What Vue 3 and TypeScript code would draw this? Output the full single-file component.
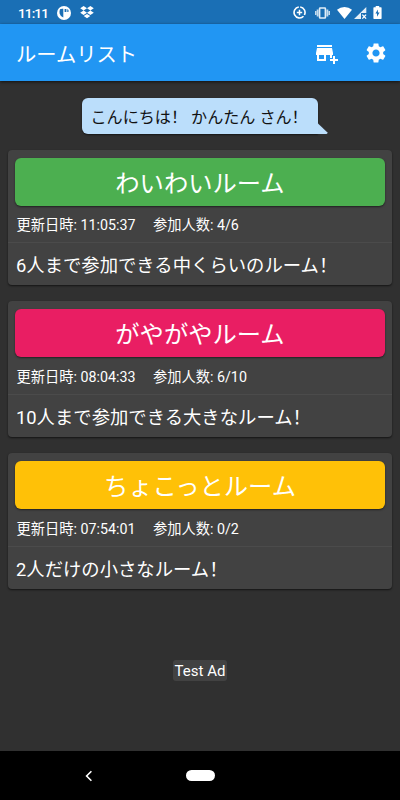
<script setup lang="ts">
interface Room {
  name: string
  tone: string
  updated: string
  members: string
  description: string
}

const rooms: Room[] = [
  { name: 'わいわいルーム', tone: 'green', updated: '11:05:37', members: '4/6', description: '6人まで参加できる中くらいのルーム！' },
  { name: 'がやがやルーム', tone: 'pink', updated: '08:04:33', members: '6/10', description: '10人まで参加できる大きなルーム！' },
  { name: 'ちょこっとルーム', tone: 'amber', updated: '07:54:01', members: '0/2', description: '2人だけの小さなルーム！' },
]
</script>

<template>
  <div class="screen">
    <div class="status">
      <span class="clock">11:11</span>
      <svg class="app-icon" width="14" height="14" viewBox="0 0 14 14">
        <circle cx="7" cy="7" r="7" fill="#fff" />
        <path d="M3 3.3Q4 2.6 6.3 2.8V11.6Q3.4 10.5 2.6 7.5Q2.2 5 3 3.3Z M7.6 3H9.4V6H7.6Z M10.3 3Q12 3.8 11.6 5.4Q11.2 6.2 10.3 6Z" fill="#1a6fb5" />
      </svg>
      <svg class="dropbox" width="14" height="13" viewBox="0 0 14 13">
        <path d="M3.6 0L7 2.2L3.6 4.4L.2 2.2Z M10.4 0L13.8 2.2L10.4 4.4L7 2.2Z M3.6 4.5L7 6.7L3.6 8.9L.2 6.7Z M10.4 4.5L13.8 6.7L10.4 8.9L7 6.7Z M7 7.9L10.3 10.1L7 12.3L3.7 10.1Z" fill="#fff" />
      </svg>
      <span class="grow"></span>
      <svg class="saver" width="13" height="13" viewBox="0 0 13 13" fill="none" stroke="#fff">
        <path d="M7.2 1A5.5 5.5 0 0 1 11.4 9M10.5 10.3A5.5 5.5 0 1 1 5.8 1" stroke-width="1.6" />
        <path d="M6.5 3.8V9.2M3.8 6.5H9.2" stroke-width="1.5" />
      </svg>
      <svg class="vibrate" width="15" height="12" viewBox="0 0 15 12">
        <path d="M0 4H1.4V8H0Z M1.7 2.5H3.6V9.5H1.7Z M13.6 4H15V8H13.6Z M11.4 2.5H13.3V9.5H11.4Z" fill="#c4dbed" />
        <rect x="4.6" y="1" width="5.8" height="10" rx=".6" fill="none" stroke="#e2eef7" stroke-width="1.6" />
      </svg>
      <svg class="wifi" width="15" height="12" viewBox="0 0 15 12">
        <path d="M7.5 12L0 2.7Q3.2 0 7.5 0T15 2.7Z" fill="#fff" />
      </svg>
      <svg class="signal" width="13" height="12" viewBox="0 0 13 12">
        <path d="M0 12L12.3 0V6H7V12Z" fill="#e4eff8" />
        <path d="M8.3 7.6L12.1 11.6M12.1 7.6L8.3 11.6" stroke="#fff" stroke-width="1.3" />
      </svg>
      <svg class="battery" width="9" height="13" viewBox="0 0 9 13">
        <path d="M2.7 0H6.2V1.3H8Q8.6 1.3 8.6 2V12.3Q8.6 13 8 13H1Q.4 13 .4 12.3V2Q.4 1.3 1 1.3H2.7Z" fill="#fff" />
        <path d="M4.9 3.4L2.4 7.5H4V10.8L6.6 6.6H4.9Z" fill="#1a6fb5" />
      </svg>
    </div>

    <header class="appbar">
      <h1>ルームリスト</h1>
      <span class="grow"></span>
      <svg class="add-room" width="24" height="24" viewBox="0 0 24 24" fill="#fff">
        <path d="M15 17h2v-3h1v-2l-1-5H2l-1 5v2h1v6h9v-6h4v3zm-6 1H4v-4h5v4zM2 4h15v2H2zM20 18v-3h-2v3h-3v2h3v3h2v-3h3v-2z" />
      </svg>
      <svg class="settings" width="24" height="24" viewBox="0 0 24 24" fill="#fff">
        <path d="M19.14 12.94c.04-.3.06-.61.06-.94 0-.32-.02-.64-.07-.94l2.03-1.58c.18-.14.23-.41.12-.61l-1.92-3.32c-.12-.22-.37-.29-.59-.22l-2.39.96c-.5-.38-1.03-.7-1.62-.94l-.36-2.54c-.04-.24-.24-.41-.48-.41h-3.84c-.24 0-.43.17-.47.41l-.36 2.54c-.59.24-1.13.57-1.62.94l-2.39-.96c-.22-.08-.47 0-.59.22L2.74 8.87c-.12.21-.08.47.12.61l2.03 1.58c-.05.3-.09.63-.09.94s.02.64.07.94l-2.03 1.58c-.18.14-.23.41-.12.61l1.92 3.32c.12.22.37.29.59.22l2.39-.96c.5.38 1.03.7 1.62.94l.36 2.54c.05.24.24.41.48.41h3.84c.24 0 .44-.17.47-.41l.36-2.54c.59-.24 1.13-.56 1.62-.94l2.39.96c.22.08.47 0 .59-.22l1.92-3.32c.12-.22.07-.47-.12-.61l-2.01-1.58zM12 15.6c-1.98 0-3.6-1.62-3.6-3.6s1.62-3.6 3.6-3.6 3.6 1.62 3.6 3.6-1.62 3.6-3.6 3.6z" />
      </svg>
    </header>

    <main>
      <div class="bubble">
        <span>こんにちは！ かんたん さん！</span>
        <svg class="tail" width="12" height="12" viewBox="0 0 12 12"><path d="M0 0L2 1.5L11.2 10.2Q12 11.8 10.4 12H0Z" fill="#bbdefb" /></svg>
      </div>

      <section v-for="room in rooms" :key="room.name" class="card">
        <button class="room-button" :class="room.tone">{{ room.name }}</button>
        <div class="meta">
          <span class="updated">更新日時: {{ room.updated }}</span>
          <span>参加人数: {{ room.members }}</span>
        </div>
        <p class="description">{{ room.description }}</p>
      </section>

      <div class="ad">Test Ad</div>
    </main>

    <nav class="navbar">
      <svg class="back" width="8" height="12" viewBox="0 0 8 12"><path d="M6.4 1.2L1.6 6L6.4 10.8" fill="none" stroke="#fff" stroke-width="1.6" /></svg>
      <span class="home"></span>
    </nav>
  </div>
</template>

<style>
body {
  margin: 0;
  background: #303030;
}
</style>

<style scoped>
.screen {
  width: 400px;
  height: 800px;
  display: flex;
  flex-direction: column;
  overflow: hidden;
  background: #303030;
  color: #fff;
  font-family: Roboto, 'Noto Sans CJK SC', sans-serif;
}
.status {
  box-sizing: border-box;
  height: 24px;
  flex: none;
  display: flex;
  align-items: center;
  padding: 1px 18px 0 18px;
  background: #1a6fb5;
}
.clock {
  width: 39px;
  font-size: 13.6px;
  font-weight: 500;
  letter-spacing: -0.9px;
  line-height: 24px;
}
.dropbox { margin-left: 9px; }
.grow { flex: 1; }
.vibrate { margin-left: 9px; }
.wifi { margin-left: 7px; }
.signal { margin-left: 1.5px; }
.battery { margin-left: 6.5px; }
.saver { margin-right: 0.5px; }
.appbar {
  position: relative;
  height: 57px;
  flex: none;
  display: flex;
  align-items: center;
  box-sizing: border-box;
  padding: 1px 12.5px 0 16px;
  background: #2196f3;
  box-shadow: 0 1px 3px rgba(0, 0, 0, 0.65);
}
h1 {
  margin: 0;
  padding-top: 3px;
  font-size: 20.3px;
  font-weight: 400;
  line-height: 30px;
}
.settings { margin-left: 25px; }
main {
  flex: 1;
  display: flex;
  flex-direction: column;
  align-items: center;
  padding: 16.6px 8px 0;
}
.bubble {
  position: relative;
  box-sizing: border-box;
  width: 236px;
  height: 36px;
  flex: none;
  margin: 0 0 16px 0;
  padding-left: 8.5px;
  border-radius: 6px 6px 0 6px;
  background: #bbdefb;
  box-shadow: 0 1px 2px rgba(0, 0, 0, 0.55);
  color: #111;
  font-size: 16.1px;
  line-height: 39px;
  white-space: nowrap;
}
.tail {
  position: absolute;
  right: -10px;
  bottom: 0;
}
.card {
  box-sizing: border-box;
  width: 384px;
  height: 135.8px;
  flex: none;
  margin-bottom: 16.1px;
  border-radius: 4px;
  background: #424242;
  box-shadow: 0 1px 2px rgba(0, 0, 0, 0.6);
  padding-top: 8px;
}
.room-button {
  display: block;
  width: 370px;
  height: 48px;
  margin: 0 auto;
  padding: 3px 0 0;
  border: 0;
  border-radius: 6px;
  box-shadow: 0 1px 2px rgba(0, 0, 0, 0.5);
  color: #fff;
  font: inherit;
  font-size: 24.3px;
  line-height: 46px;
}
.green { background: #4caf50; }
.pink { background: #e91e63; }
.amber { background: #ffc107; }
.meta {
  box-sizing: border-box;
  display: flex;
  height: 37.4px;
  padding: 0.35px 0 0 8.5px;
  border-bottom: 1px solid #4b4b4b;
  font-size: 14.25px;
  line-height: 38.8px;
}
.updated { width: 136.5px; }
.description {
  margin: 0;
  padding-left: 8px;
  font-size: 18.35px;
  line-height: 45px;
}
.ad {
  flex: none;
  margin-top: 54.3px;
  padding: 0 2px;
  height: 21px;
  border-radius: 3px;
  background: #424242;
  font-size: 15px;
  line-height: 23px;
}
.navbar {
  flex: none;
  height: 49px;
  display: flex;
  align-items: center;
  background: #000;
}
.back { margin-left: 84.5px; }
.home {
  width: 29px;
  height: 11px;
  margin-left: 93.5px;
  border-radius: 5.5px;
  background: #fff;
}
</style>
